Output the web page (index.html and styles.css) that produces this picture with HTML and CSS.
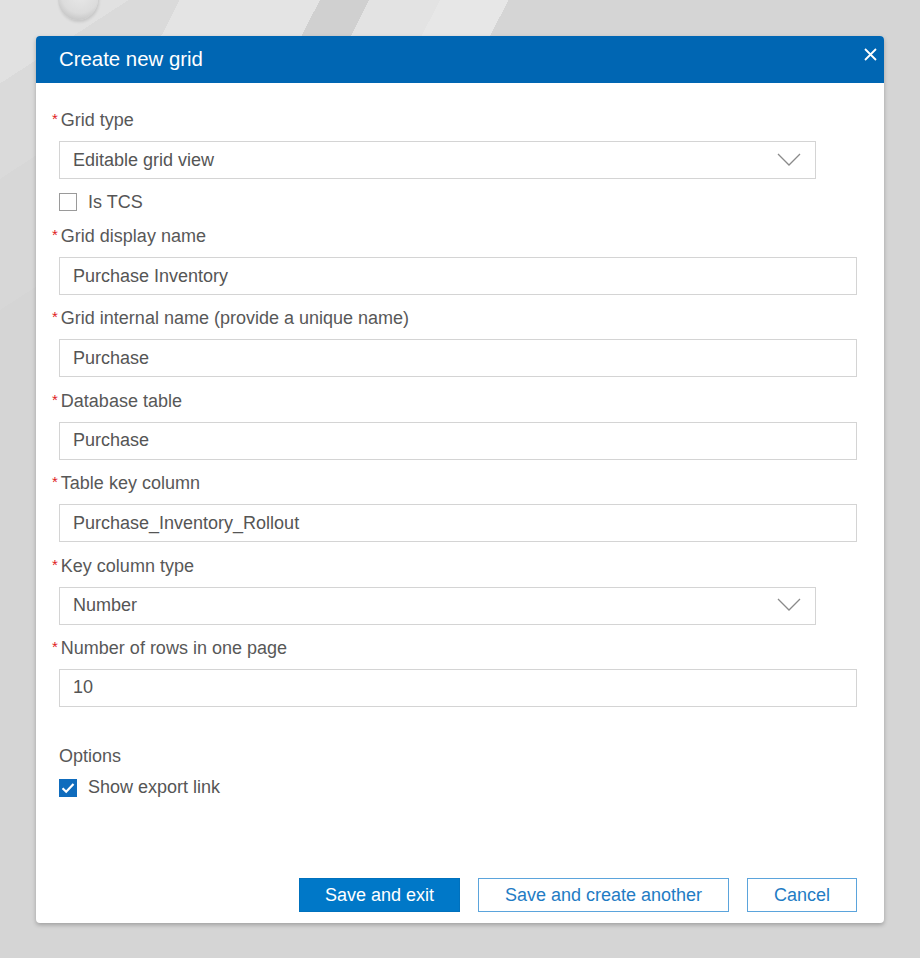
FILE: index.html
```html
<!DOCTYPE html>
<html lang="en">
<head>
<meta charset="utf-8">
<title>Create new grid</title>
<link rel="stylesheet" href="styles.css">
</head>
<body>
<div class="knob"></div>
<div class="dialog">
  <div class="dialog-header">
    <span class="dialog-title">Create new grid</span>
    <span class="close" aria-label="Close">
      <svg width="13" height="13" viewBox="0 0 13 13"><path d="M1 1 L12 12 M12 1 L1 12" stroke="#fff" stroke-width="1.8" fill="none"/></svg>
    </span>
  </div>
  <div class="dialog-body">
    <div class="field field-first">
      <div class="label"><span class="req">*</span>Grid type</div>
      <div class="control select">
        <span>Editable grid view</span>
        <svg class="chev" width="24" height="13" viewBox="0 0 24 13"><path d="M1 1 L12 12 L23 1" stroke="#8a8a8a" stroke-width="1.3" fill="none"/></svg>
      </div>
      <div class="check-row">
        <span class="checkbox"></span>
        <span class="check-label">Is TCS</span>
      </div>
    </div>
    <div class="field">
      <div class="label"><span class="req">*</span>Grid display name</div>
      <div class="control">Purchase Inventory</div>
    </div>
    <div class="field">
      <div class="label"><span class="req">*</span>Grid internal name (provide a unique name)</div>
      <div class="control">Purchase</div>
    </div>
    <div class="field">
      <div class="label"><span class="req">*</span>Database table</div>
      <div class="control">Purchase</div>
    </div>
    <div class="field">
      <div class="label"><span class="req">*</span>Table key column</div>
      <div class="control">Purchase_Inventory_Rollout</div>
    </div>
    <div class="field">
      <div class="label"><span class="req">*</span>Key column type</div>
      <div class="control select">
        <span>Number</span>
        <svg class="chev" width="24" height="13" viewBox="0 0 24 13"><path d="M1 1 L12 12 L23 1" stroke="#8a8a8a" stroke-width="1.3" fill="none"/></svg>
      </div>
    </div>
    <div class="field">
      <div class="label"><span class="req">*</span>Number of rows in one page</div>
      <div class="control">10</div>
    </div>
    <div class="options">
      <div class="options-title">Options</div>
      <div class="check-row">
        <span class="checkbox checked">
          <svg width="18" height="18" viewBox="0 0 18 18"><path d="M3.5 9.2 L7.2 12.8 L14.5 5" stroke="#fff" stroke-width="2.2" fill="none"/></svg>
        </span>
        <span class="check-label">Show export link</span>
      </div>
    </div>
  </div>
  <div class="dialog-footer">
    <button class="btn btn-primary">Save and exit</button>
    <button class="btn btn-outline btn-wide">Save and create another</button>
    <button class="btn btn-outline btn-cancel">Cancel</button>
  </div>
</div>
</body>
</html>
```

FILE: styles.css
```css
html, body {
  margin: 0;
  padding: 0;
}
body {
  width: 920px;
  height: 958px;
  overflow: hidden;
  position: relative;
  padding-top: 36px;
  box-sizing: border-box;
  font-family: "Liberation Sans", Arial, sans-serif;
  background:
    linear-gradient(117deg,
      transparent 0 160px,
      #e4e4e4 160px 285px,
      #d0d0d0 285px 329px,
      #e3e3e3 329px 392px,
      #e7e7e7 392px 453px,
      transparent 453px) top left / 100% 36px no-repeat,
    linear-gradient(147deg,
      #e1e1e1 0 70px,
      #dadada 70px 150px,
      #d7d7d7 150px 260px,
      #d5d5d5 260px);
  background-color: #d5d5d5;
}
.knob {
  position: absolute;
  left: 58px;
  top: -22px;
  width: 40px;
  height: 42px;
  border-radius: 50%;
  background: radial-gradient(circle at 55% 40%, #e8e8e8 0, #dcdcdc 55%, #c4c4c4 80%, #d8d8d8 100%);
  box-shadow: 1px 2px 3px rgba(0,0,0,0.12);
}
.dialog {
  margin-left: 36px;
  width: 848px;
  height: 887px;
  background: #fff;
  border-radius: 4px;
  box-shadow: 0 2px 4px rgba(0,0,0,0.25);
  display: flex;
  flex-direction: column;
  overflow: hidden;
}
.dialog-header {
  height: 47px;
  flex-shrink: 0;
  background: #0066b3;
  display: flex;
  align-items: center;
  justify-content: space-between;
  padding: 0 7px 0 23px;
  box-sizing: border-box;
}
.dialog-title {
  color: #fff;
  font-size: 20.4px;
}
.close {
  display: flex;
  align-self: flex-start;
  margin-top: 12px;
}
.dialog-body {
  padding: 27px 27px 0 16px;
}
.field {
  margin-bottom: 13.4px;
}
.field-first {
  margin-bottom: 15px;
}
.label {
  height: 21px;
  font-size: 18px;
  line-height: 21px;
  color: #585858;
  margin-bottom: 10px;
  white-space: nowrap;
}
.req {
  color: #e0201c;
  font-size: 15px;
  margin-right: 3px;
  vertical-align: top;
  line-height: 18px;
}
.control {
  margin-left: 7px;
  height: 38px;
  box-sizing: border-box;
  border: 1px solid #d4d4d4;
  font-size: 18px;
  color: #555;
  padding: 0 13px;
  display: flex;
  align-items: center;
}
.select {
  width: 757px;
  justify-content: space-between;
  padding-right: 14px;
}
.chev {
  display: block;
  margin-top: -2px;
}
.check-row {
  display: flex;
  align-items: center;
  margin-left: 7px;
  margin-top: 14px;
  height: 18px;
}
.checkbox {
  width: 18px;
  height: 18px;
  box-sizing: border-box;
  border: 1px solid #9a9a9a;
  background: #fff;
  display: flex;
}
.checkbox.checked {
  background: #0f6cbd;
  border-color: #0f6cbd;
}
.checkbox.checked svg {
  margin: -1px;
}
.check-label {
  margin-left: 11px;
  font-size: 18px;
  color: #555;
}
.options {
  margin-top: 39.5px;
  margin-left: 7px;
}
.options-title {
  font-size: 18px;
  line-height: 21px;
  color: #585858;
}
.options .check-row {
  margin-left: 0;
  margin-top: 11.5px;
}
.dialog-footer {
  margin-top: auto;
  padding: 0 27px 11px 0;
  display: flex;
  justify-content: flex-end;
  gap: 18px;
}
.btn {
  height: 34px;
  box-sizing: border-box;
  font-family: "Liberation Sans", Arial, sans-serif;
  font-size: 18px;
  padding: 0;
  border-radius: 0;
  cursor: pointer;
}
.btn-primary {
  width: 161px;
  background: #0078c8;
  border: 1px solid #0071bd;
  color: #fff;
}
.btn-outline {
  background: #fff;
  border: 1px solid #5ba4dc;
  color: #1f7cc4;
}
.btn-wide {
  width: 251px;
}
.btn-cancel {
  width: 110px;
}
```
